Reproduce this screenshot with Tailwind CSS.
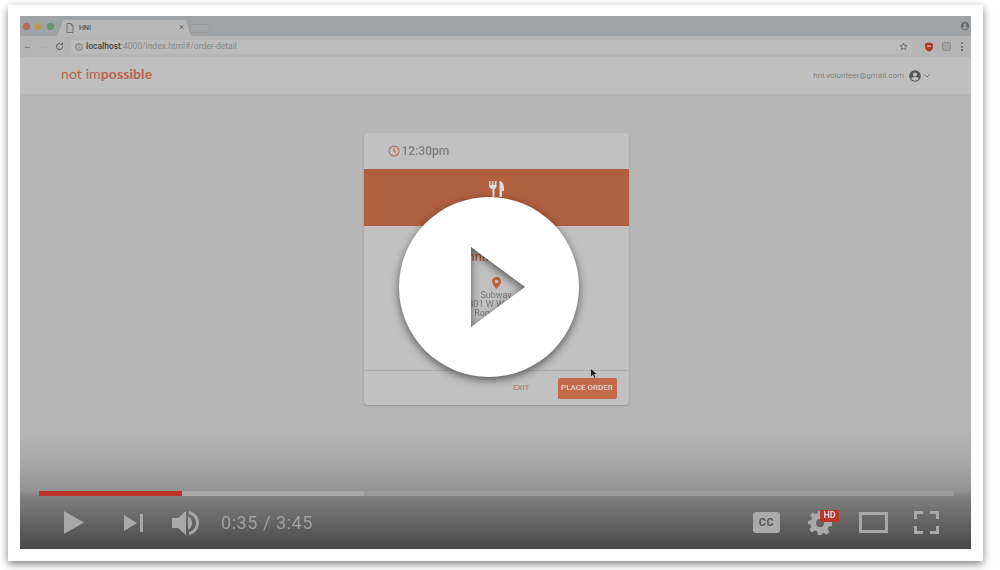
<!DOCTYPE html>
<html lang="en">
<head>
  <meta charset="UTF-8" />
  <title>HNI video</title>
  <script src="https://cdn.jsdelivr.net/npm/@tailwindcss/browser@4"></script>
</head>
<body class="bg-white w-[1000px] h-[570px] overflow-hidden font-['Roboto',sans-serif]">
  <div class="ml-[8px] mt-[5px] w-[975px] h-[556px] bg-white pl-[12px] pt-[11px] shadow-[0_3px_8px_rgba(0,0,0,0.5)]">
    <div class="relative w-[951px] h-[533px] overflow-hidden bg-[#b6b6b6]">

      <!-- blurred page inside the video -->
      <div class="flex flex-col h-full blur-[0.55px]">
        <!-- tab strip -->
        <div class="h-[20px] bg-[#9fa3a5] flex items-center pl-[3px] pr-[1px] shrink-0">
          <div class="flex gap-[5px] mr-[5px]">
            <span class="w-[7px] h-[7px] rounded-full bg-[#b5675a]"></span>
            <span class="w-[7px] h-[7px] rounded-full bg-[#b59c52]"></span>
            <span class="w-[7px] h-[7px] rounded-full bg-[#5f9c63]"></span>
          </div>
          <div class="w-[134px] h-[16px] mt-[4px] -ml-[2px] bg-[#b7b7b7] [clip-path:polygon(5%_0,96%_0,100%_100%,0_100%)] flex items-center pl-[9px] gap-[5px] text-[#555]">
            <svg class="w-[8px] h-[10px]" viewBox="0 0 8 10" fill="none" stroke="#666" stroke-width="0.8"><path d="M1 .5h4l2 2v7H1z M5 .5v2h2"/></svg>
            <span class="text-[7px] font-medium flex-1">HNI</span>
            <span class="text-[9px] mr-[7px] text-[#666]">×</span>
          </div>
          <div class="w-[20px] h-[9px] -ml-[1px] mt-[5px] bg-[#a4a7a9] border border-[#999] rounded-[2px] -skew-x-12"></div>
          <div class="flex-1"></div>
          <svg class="w-[10px] h-[10px]" viewBox="0 0 24 24" fill="#666"><path d="M12 2a10 10 0 100 20 10 10 0 000-20zm0 4a3.500 3.500 0 110 7 3.500 3.500 0 010-7zm0 14a8 8 0 01-6.500-3.300c0-2.200 4.300-3.400 6.500-3.400s6.500 1.200 6.500 3.400A8 8 0 0112 20z"/></svg>
        </div>

        <!-- toolbar -->
        <div class="h-[21px] bg-[#b4b4b4] flex items-center pl-[3px] pr-[3px] gap-[7px] shrink-0">
          <span class="text-[9px] w-[9px] text-[#666]">←</span>
          <span class="text-[9px] w-[9px] text-[#a5a5a5]">→</span>
          <svg class="w-[9px] h-[9px]" viewBox="0 0 24 24" fill="none" stroke="#555" stroke-width="2.500"><path d="M20 12a8 8 0 11-2.500-5.800M20 2v5h-5"/></svg>
          <div class="w-[841px] h-[14px] bg-[#bbb] rounded-[2px] flex items-center pl-[4px] pr-[4px] text-[8.500px] text-[#8a8a8a]">
            <svg class="w-[8px] h-[8px] mr-[3px]" viewBox="0 0 24 24" fill="none" stroke="#555" stroke-width="2"><circle cx="12" cy="12" r="10"/><path d="M12 11v6M12 7v2"/></svg>
            <span><span class="text-[#444] font-medium">localhost</span>:4000/index.html#/order-detail</span>
            <svg class="w-[9px] h-[9px] ml-auto" viewBox="0 0 24 24" fill="none" stroke="#555" stroke-width="2"><path d="M12 3l2.800 6 6.200.7-4.600 4.300 1.300 6.500L12 17.200 6.300 20.500l1.300-6.500L3 9.700 9.200 9z"/></svg>
          </div>
          <svg class="w-[10px] h-[10px] ml-[5px]" viewBox="0 0 10 10" fill="#a8392b"><path d="M1 1.500L5 .5l4 1v3.500c0 2.500-2 4-4 4.500C3 9 1 7.500 1 5z"/><rect x="3" y="3.500" width="4" height="1.500" fill="#d8a8a0"/></svg>
          <div class="w-[9px] h-[9px] ml-[1px] bg-[#a5a5a5] border border-[#8e8e8e] rounded-[2px]"></div>
          <div class="flex flex-col gap-[1.500px] ml-[3px]">
            <span class="w-[2px] h-[2px] bg-[#777]"></span>
            <span class="w-[2px] h-[2px] bg-[#777]"></span>
            <span class="w-[2px] h-[2px] bg-[#777]"></span>
          </div>
        </div>

        <!-- app header -->
        <div class="h-[37px] bg-[#bfbfbf] flex items-center pl-[41px] pr-[41px] shrink-0">
          <span class="text-[14px] leading-[14px] -mt-[3px] tracking-[0.1px] text-[#b5654a] font-['Lato',sans-serif] font-normal">not im<span class="font-bold">possible</span></span>
          <span class="ml-auto text-[8px] text-[#808080]">hni.volunteer@gmail.com</span>
          <svg class="w-[14px] h-[14px] ml-[4px]" viewBox="0 0 24 24" fill="#555"><path d="M12 2a10 10 0 100 20 10 10 0 000-20zm0 4a3.500 3.500 0 110 7 3.500 3.500 0 010-7zm0 14a8 8 0 01-6.500-3.300c0-2.200 4.300-3.400 6.500-3.400s6.500 1.200 6.500 3.400A8 8 0 0112 20z"/></svg>
          <svg class="w-[6px] h-[4px] ml-[2px]" viewBox="0 0 6 4" fill="none" stroke="#777" stroke-width="1"><path d="M.5.5L3 3 5.500.5"/></svg>
        </div>

        <!-- page body with order card -->
        <div class="flex-1 flex justify-center items-start pt-[39px]">
          <div class="relative w-[265px] h-[272px] ml-[1px] bg-[#c1c1c1] rounded-[4px] shadow-[0_1px_2px_rgba(0,0,0,0.2)] flex flex-col">
            <div class="h-[36px] flex items-center pl-[24px] gap-[2px] text-[#7e7e7e] text-[12px] font-medium shrink-0">
              <svg class="w-[12px] h-[12px]" viewBox="0 0 24 24" fill="none" stroke="#b5755c" stroke-width="2.500"><circle cx="12" cy="12" r="10"/><path d="M12 6v6l4 3"/></svg>
              12:30pm
            </div>
            <div class="h-[57px] bg-[#b0603f] flex justify-center pt-[12px] shrink-0">
              <svg class="w-[15px] h-[16px]" viewBox="0 0 15 16" fill="#dcdcdc"><path d="M0 0h1.500v4H3V0h1.500v4H6V0h1.500v5.500c0 1.500-1 2.200-2 2.500v8h-2V8c-1-.3-3.500-1-3.500-2.500z"/><path d="M10.500 0C13 0 15 3 15 7v3h-2v6h-2.500z"/></svg>
            </div>
            <div class="h-[145px] flex flex-col items-center pt-[23px] shrink-0 text-[#777] text-[9px] leading-[9px] border-b border-[#ababab]">
              <span class="text-[13px] leading-[15px] font-medium text-[#b5654a] mb-[13px]">Jennifer Smith</span>
              <svg class="w-[9px] h-[12px] mb-[2px]" viewBox="0 0 9 12" fill="#bd6240"><path d="M4.500 0A4.500 4.500 0 000 4.500C0 7.500 4.500 12 4.500 12S9 7.500 9 4.500A4.500 4.500 0 004.500 0zm0 6.200a1.700 1.700 0 110-3.400 1.700 1.700 0 010 3.400z"/></svg>
              <span>Subway</span>
              <span>301 W Walnut</span>
              <span>Rogers, AR</span>
            </div>
            <div class="flex-1 flex items-center justify-end pr-[12px] gap-[28px]">
              <span class="text-[8px] font-medium text-[#b88371]">EXIT</span>
              <span class="w-[59px] h-[21px] bg-[#c26a4a] rounded-[2px] flex items-center justify-center text-[8px] font-medium text-[#e3d3cc]">PLACE ORDER</span>
            </div>
            <svg class="absolute left-[227px] top-[236px] w-[6px] h-[9px]" viewBox="0 0 6 9" fill="#222"><path d="M0 0l5.500 5H3l1.500 3.500-1 .5L2 5.500 0 7.500z"/></svg>
          </div>
        </div>
      </div>

      <!-- player gradient, slightly darker under the progress bar -->
      <div class="absolute left-0 right-0 bottom-0 h-[119px] bg-[linear-gradient(to_bottom,#b6b6b600_0%,#a9a9a9_25%,#939393_51%,#7f7f7f_56%,#484848_100%)]"></div>

      <!-- progress bar -->
      <div class="absolute left-[19px] top-[475px] w-[915px] h-[5px] bg-[#9a9a9a] flex blur-[0.4px]">
        <div class="w-[143px] bg-[#c0352b]"></div>
        <div class="w-[182px] bg-[#a8a8a8]"></div>
      </div>

      <!-- player controls -->
      <div class="absolute left-0 right-0 top-[495px] h-[23px] flex items-center pl-[44px] pr-[32px] text-[#a8a8a8] blur-[0.5px]">
        <svg class="w-[20px] h-[23px]" viewBox="0 0 20 23" fill="#a8a8a8"><path d="M0 0l20 11.500L0 23z"/></svg>
        <svg class="w-[19px] h-[18px] ml-[40px]" viewBox="0 0 19 18" fill="#a8a8a8"><path d="M0 1l13 8-13 8zM16 0h3v18h-3z"/></svg>
        <svg class="w-[28px] h-[26px] ml-[29px]" viewBox="0 0 28 26" fill="#a8a8a8"><path d="M0 8h6l8-7v24l-8-7H0z"/><path d="M16 6.500c2.500 1 4 3.500 4 6.500s-1.500 5.500-4 6.500z"/><path d="M17 1c5.500 1 10 6 10 12s-4.500 11-10 12v-3c4-1 7-4.500 7-9s-3-8-7-9z"/></svg>
        <span class="ml-[21px] text-[18px] tracking-[0.55px] text-[#a0a0a0]">0:35 / 3:45</span>

        <div class="ml-auto w-[27px] h-[21px] bg-[#aaa] rounded-[3px] flex items-center justify-center text-[#555] text-[11px] font-bold leading-none tracking-[0.5px]">CC</div>
        <div class="relative w-[24px] h-[24px] ml-[28px]">
          <svg class="w-[24px] h-[24px]" viewBox="0 0 24 24" fill="#a8a8a8"><path fill-rule="evenodd" d="M10 0h4l.7 3.400 2.300 1 2.900-1.900 2.800 2.800-1.900 2.900 1 2.300L24 11v4l-3.400.7-1 2.300 1.900 2.900-2.800 2.800-2.900-1.900-1.500.6L14 24h-4l-.7-3.400-2.300-1-2.900 1.900-2.800-2.800 1.900-2.900-1-2.300L0 13v-3l3.200-.7 1-2.300-1.900-2.900 2.800-2.800L7 3.200l2.300-1zM12 8a4 4 0 100 8 4 4 0 000-8z"/></svg>
          <span class="absolute left-[12px] -top-[1px] w-[19px] h-[12px] bg-[#b8362d] rounded-[1px] flex items-center justify-center text-[9px] font-bold leading-none text-[#d8d8d8]">HD</span>
        </div>
        <div class="w-[29px] h-[21px] ml-[27px] border-[3px] border-[#a8a8a8]"></div>
        <svg class="w-[25px] h-[23px] ml-[26px]" viewBox="0 0 25 23" fill="none" stroke="#a8a8a8" stroke-width="3"><path d="M1.500 8V1.500H9M16 1.500h7.500V8M1.500 15v6.500H9M16 21.500h7.500V15"/></svg>
      </div>

      <!-- big play button with see-through triangle -->
      <svg class="absolute left-[379px] top-[181px] w-[180px] h-[180px] overflow-visible drop-shadow-[0_3px_4px_rgba(0,0,0,0.55)]" viewBox="0 0 180 180">
        <path fill="#fff" fill-rule="evenodd" d="M90 0a90 90 0 100 180 90 90 0 000-180zM72 50l54 40-54 40z"/>
      </svg>
    </div>
  </div>
</body>
</html>
